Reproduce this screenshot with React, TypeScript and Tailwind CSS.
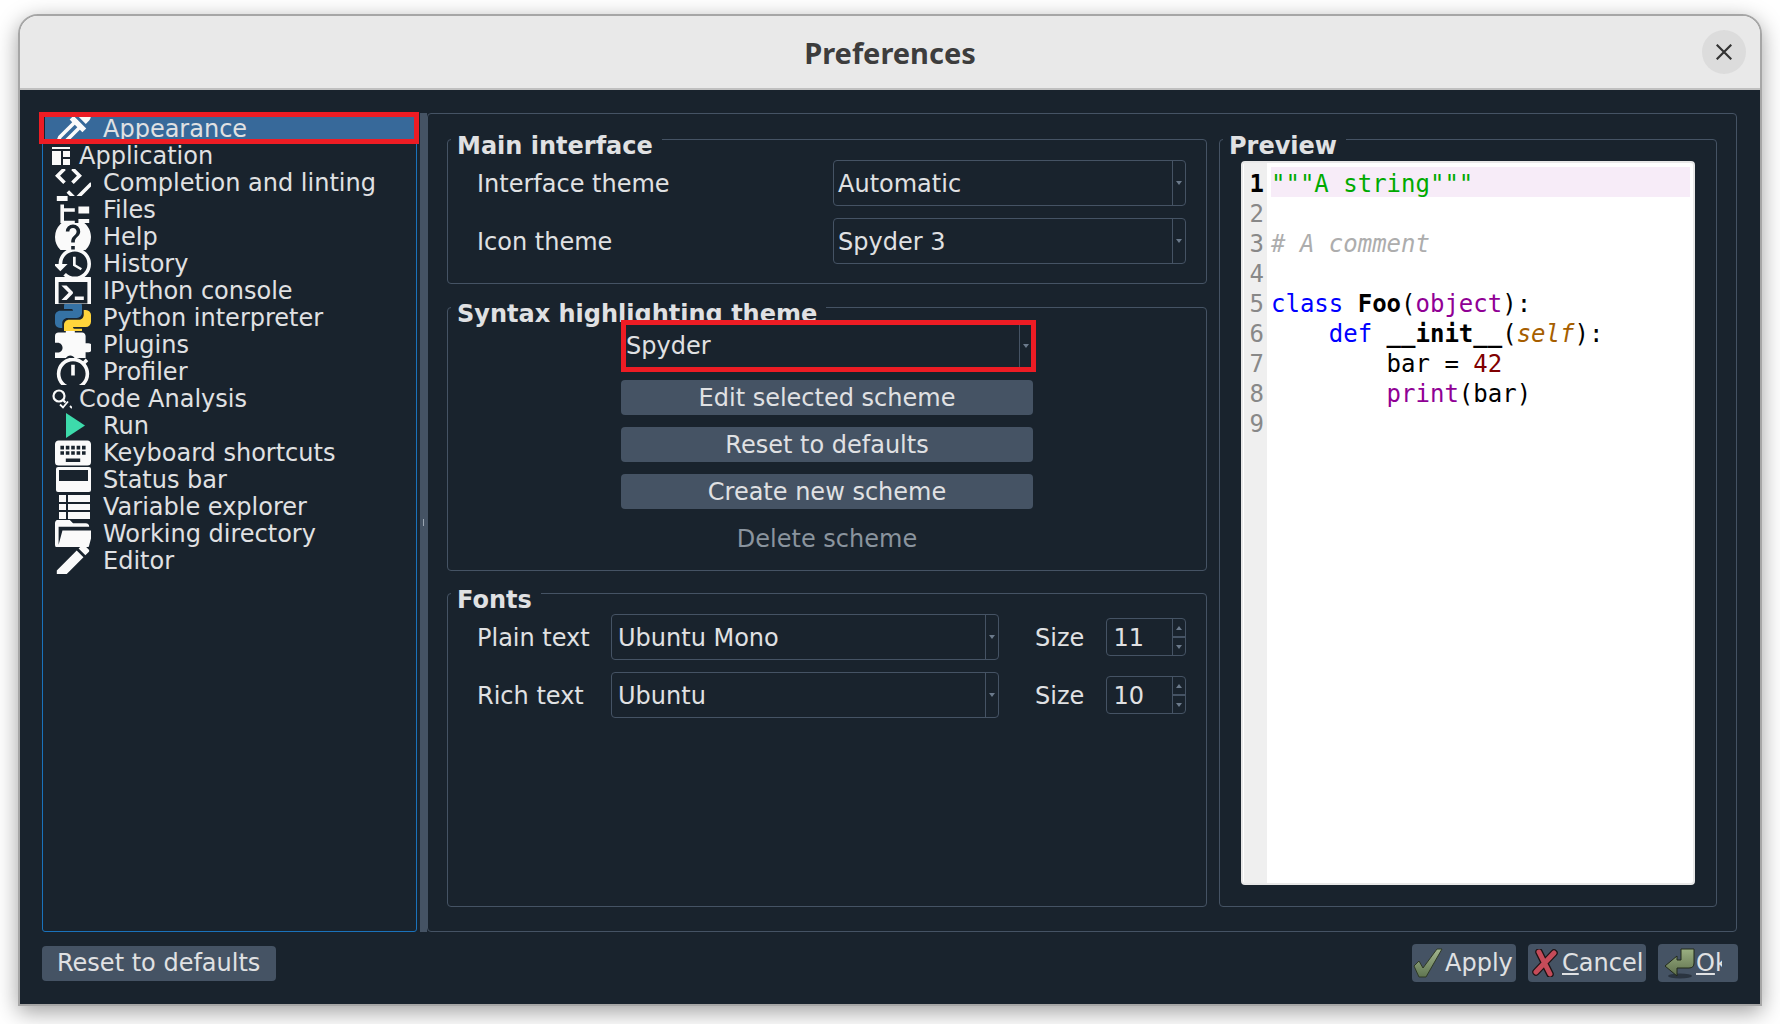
import type { ReactNode } from "react";

const sans = "font-['DejaVu_Sans',sans-serif]";

type NavItem = { label: string; icon: ReactNode; small?: boolean };

function MdiIcon({ d }: { d: string }) {
  return (
    <svg viewBox="2 2 20 20" className="h-9 w-9 shrink-0" fill="#fafafa" fillRule="evenodd">
      <path d={d} />
    </svg>
  );
}

function PythonIcon() {
  return (
    <svg viewBox="2 2 20 20" className="h-9 w-9 shrink-0">
      <path
        fill="#ffd43b"
        d="M19.14,7.5A2.86,2.86 0 0,1 22,10.36V14.14A2.86,2.86 0 0,1 19.14,17H12C12,17.39 12.32,17.96 12.71,17.96H17V19.64A2.86,2.86 0 0,1 14.14,22.5H9.86A2.86,2.86 0 0,1 7,19.64V15.89C7,14.31 8.28,13.04 9.86,13.04H15.11C16.69,13.04 17.96,11.76 17.96,10.18V7.5H19.14Z"
      />
      <path
        fill="#3572a5"
        d="M4.86,17.5C3.28,17.5 2,16.22 2,14.64V10.86C2,9.28 3.28,8 4.86,8H12C12,7.61 11.68,7.04 11.29,7.04H7V5.36C7,3.78 8.28,2.5 9.86,2.5H14.14C15.72,2.5 17,3.78 17,5.36V9.11C17,10.69 15.72,11.96 14.14,11.96H8.89C7.31,11.96 6.04,13.24 6.04,14.82V17.5H4.86Z"
      />
    </svg>
  );
}

function ApplicationIcon() {
  return (
    <svg viewBox="0 0 18 18" className="h-[18px] w-[18px] shrink-0" fill="#fafafa">
      <rect x="0" y="0" width="18" height="2" />
      <rect x="0" y="4" width="9" height="14" />
      <rect x="11" y="4" width="7" height="6" />
      <rect x="11" y="12" width="7" height="6" />
    </svg>
  );
}

function CodeAnalysisIcon() {
  return (
    <svg viewBox="0 0 20 20" className="h-5 w-5 shrink-0" fill="none" stroke="#fafafa" strokeWidth="2.2">
      <circle cx="7" cy="7" r="5.5" />
      <path d="M11 11 L13.5 13.5" />
      <path d="M8 15.5 L11 18.5 L16 12.5" strokeWidth="1.8" />
      <path d="M18 17 L20 19" strokeWidth="1.8" />
    </svg>
  );
}

function StatusIcon() {
  return (
    <svg viewBox="0 0 35 25" className="h-[25px] w-[35px] shrink-0">
      <rect width="35" height="25" rx="2" fill="#fafafa" />
      <rect x="3" y="3" width="29" height="11" fill="#19232d" />
    </svg>
  );
}

function TableIcon() {
  return (
    <svg viewBox="0 0 31 24" className="h-6 w-[31px] shrink-0" fill="#fafafa">
      <rect x="0" y="0" width="7" height="7" />
      <rect x="9" y="0" width="22" height="7" />
      <rect x="0" y="9" width="7" height="6" />
      <rect x="9" y="9" width="22" height="6" />
      <rect x="0" y="17" width="7" height="7" />
      <rect x="9" y="17" width="22" height="7" />
    </svg>
  );
}

const navItems: NavItem[] = [
  {
    label: "Appearance",
    icon: (
      <MdiIcon d="M19.35,11.72L17.22,13.85L15.81,12.43L8.1,20.14L3.5,22L2,20.5L3.86,15.9L11.57,8.19L10.15,6.78L12.28,4.65L19.35,11.72M16.76,3C17.93,1.83 19.83,1.83 21,3C22.17,4.17 22.17,6.07 21,7.24L19.08,9.16L14.84,4.92L16.76,3M5.56,17.03L4.5,19.5L6.97,18.44L14.4,11L13,9.6L5.56,17.03Z" />
    ),
  },
  { label: "Application", icon: <ApplicationIcon />, small: true },
  {
    label: "Completion and linting",
    icon: (
      <MdiIcon d="M6.59,3.41L2,8L6.59,12.6L8,11.18L4.82,8L8,4.82L6.59,3.41M12.41,3.41L11,4.82L14.18,8L11,11.18L12.41,12.6L17,8L12.41,3.41M21.59,11.59L13.5,19.68L9.83,16L8.42,17.41L13.5,22.5L23,13L21.59,11.59Z" />
    ),
  },
  {
    label: "Files",
    icon: <MdiIcon d="M3,3H9V7H3V3M15,10H21V14H15V10M15,17H21V21H15V17M13,13H7V18H13V20H7L5,20V9H7V11H13V13Z" />,
  },
  {
    label: "Help",
    icon: (
      <MdiIcon d="M15.07,11.25L14.17,12.17C13.45,12.89 13,13.5 13,15H11V14.5C11,13.39 11.45,12.39 12.17,11.67L13.41,10.41C13.78,10.05 14,9.55 14,9C14,7.89 13.1,7 12,7A2,2 0 0,0 10,9H8A4,4 0 0,1 12,5A4,4 0 0,1 16,9C16,9.88 15.64,10.67 15.07,11.25M13,19H11V17H13V19M12,2A10,10 0 0,0 2,12A10,10 0 0,0 12,22A10,10 0 0,0 22,12C22,6.47 17.5,2 12,2Z" />
    ),
  },
  {
    label: "History",
    icon: (
      <MdiIcon d="M13.5,8H12V13L16.28,15.54L17,14.33L13.5,12.25V8M13,3A9,9 0 0,0 4,12H1L4.96,16.03L9,12H6A7,7 0 0,1 13,5A7,7 0 0,1 20,12A7,7 0 0,1 13,19C11.07,19 9.32,18.21 8.06,16.94L6.64,18.36C8.27,20 10.5,21 13,21A9,9 0 0,0 22,12A9,9 0 0,0 13,3Z" />
    ),
  },
  {
    label: "IPython console",
    icon: (
      <MdiIcon d="M20,19V7H4V19H20M20,3A2,2 0 0,1 22,5V19A2,2 0 0,1 20,21H4A2,2 0 0,1 2,19V5A2,2 0 0,1 4,3H20M13,17V15H18V17H13M9.58,13L5.57,9H8.4L11.7,12.3C12.09,12.69 12.09,13.33 11.7,13.72L8.42,17H5.59L9.58,13Z" />
    ),
  },
  { label: "Python interpreter", icon: <PythonIcon /> },
  {
    label: "Plugins",
    icon: (
      <MdiIcon d="M20.5,11H19V7C19,5.89 18.1,5 17,5H13V3.5A2.5,2.5 0 0,0 10.5,1A2.5,2.5 0 0,0 8,3.5V5H4A2,2 0 0,0 2,7V10.8H3.5C5,10.8 6.2,12 6.2,13.5C6.2,15 5,16.2 3.5,16.2H2V20A2,2 0 0,0 4,22H7.8V20.5C7.8,19 9,17.8 10.5,17.8C12,17.8 13.2,19 13.2,20.5V22H17A2,2 0 0,0 19,20V16H20.5A2.5,2.5 0 0,0 23,13.5A2.5,2.5 0 0,0 20.5,11Z" />
    ),
  },
  {
    label: "Profiler",
    icon: (
      <MdiIcon d="M12,20A7,7 0 0,1 5,13A7,7 0 0,1 12,6A7,7 0 0,1 19,13A7,7 0 0,1 12,20M19.03,7.39L20.45,5.97C20,5.46 19.55,5 19.04,4.56L17.62,6C16.07,4.74 14.12,4 12,4A9,9 0 0,0 3,13A9,9 0 0,0 12,22C17,22 21,17.97 21,13C21,10.88 20.26,8.93 19.03,7.39M11,14H13V8H11V14M15,1H9V3H15V1Z" />
    ),
  },
  { label: "Code Analysis", icon: <CodeAnalysisIcon />, small: true },
  {
    label: "Run",
    icon: (
      <svg viewBox="0 0 36 27" className="h-[27px] w-9 shrink-0">
        <polygon points="11,1 30,13.5 11,26" fill="#3ddbab" />
      </svg>
    ),
  },
  {
    label: "Keyboard shortcuts",
    icon: (
      <MdiIcon d="M19,10H17V8H19V10M19,13H17V11H19V13M16,10H14V8H16V10M16,13H14V11H16V13M16,17H8V15H16V17M7,10H5V8H7V10M7,13H5V11H7V13M8,11H10V13H8V11M8,8H10V10H8V8M11,11H13V13H11V11M11,8H13V10H11V8M20,5H4C2.89,5 2,5.89 2,7V17A2,2 0 0,0 4,19H20A2,2 0 0,0 22,17V7C22,5.89 21.1,5 20,5Z" />
    ),
  },
  {
    label: "Status bar",
    icon: (
      <span className="flex w-9 shrink-0 justify-center">
        <StatusIcon />
      </span>
    ),
  },
  {
    label: "Variable explorer",
    icon: (
      <span className="flex w-9 shrink-0 justify-end pr-px">
        <TableIcon />
      </span>
    ),
  },
  {
    label: "Working directory",
    icon: (
      <MdiIcon d="M19,20H4C2.89,20 2,19.1 2,18V6C2,4.89 2.89,4 4,4H10L12,6H19A2,2 0 0,1 21,8H21L4,8V18L6.14,10H23.21L20.93,18.5C20.7,19.37 19.92,20 19,20Z" />
    ),
  },
  {
    label: "Editor",
    icon: (
      <MdiIcon d="M20.71,7.04C21.1,6.65 21.1,6 20.71,5.63L18.37,3.29C18,2.9 17.35,2.9 16.96,3.29L15.12,5.12L18.87,8.87L20.71,7.04M3,17.25V21H6.75L17.81,9.93L14.06,6.18L3,17.25Z" />
    ),
  },
];

function GroupBox({ title, className, children }: { title: string; className: string; children?: ReactNode }) {
  return (
    <div className={`relative rounded-[4px] border border-[#455364] ${className}`}>
      <div className="absolute -top-[9px] left-[3px] bg-[#19232d] pl-[6px] pr-[9px] text-[24px] leading-[30px] font-bold text-[#e0e1e3]">
        {title}
      </div>
      {children}
    </div>
  );
}

function ArrowDown() {
  return <div className="h-0 w-0 border-x-[3px] border-t-[4px] border-x-transparent border-t-[#6b7a8b]" />;
}

function Combo({ value, className, textClass }: { value: string; className: string; textClass: string }) {
  return (
    <div className={`flex h-[46px] items-stretch rounded-[4px] border border-[#455364] bg-[#19232d] ${className}`}>
      <div className={`flex-1 self-center text-[24px] leading-[36px] text-[#e0e1e3] ${textClass}`}>{value}</div>
      <div className="flex w-[13px] items-center justify-center border-l border-[#455364]">
        <ArrowDown />
      </div>
    </div>
  );
}

function SpinBox({ value }: { value: string }) {
  return (
    <div className="flex h-[38px] w-[80px] items-stretch rounded-[4px] border border-[#455364]">
      <div className="flex-1 self-center pl-[7px] pt-[2px] text-[24px] leading-[36px] text-[#e0e1e3]">{value}</div>
      <div className="flex w-[13px] flex-col border-l border-[#455364]">
        <div className="flex flex-1 items-center justify-center border-b-2 border-[#455364]">
          <div className="h-0 w-0 border-x-[3px] border-b-[4px] border-x-transparent border-b-[#6b7a8b]" />
        </div>
        <div className="flex flex-1 items-center justify-center">
          <ArrowDown />
        </div>
      </div>
    </div>
  );
}

function ThemeRow({ label, value }: { label: string; value: string }) {
  return (
    <div className="flex items-center">
      <div className="w-[356px] pt-[2px] text-[24px] leading-[36px] text-[#e0e1e3]">{label}</div>
      <Combo value={value} className="w-[353px]" textClass="pl-[4px] pt-[2px]" />
    </div>
  );
}

function FontRow({ label, value, size }: { label: string; value: string; size: string }) {
  return (
    <div className="flex items-center">
      <div className="w-[134px] pt-[2px] text-[24px] leading-[36px] text-[#e0e1e3]">{label}</div>
      <Combo value={value} className="w-[388px]" textClass="pl-[6px] pt-[2px]" />
      <div className="ml-[36px] w-[70.5px] pt-[2px] text-[24px] leading-[36px] text-[#e0e1e3]">Size</div>
      <SpinBox value={size} />
    </div>
  );
}

function SchemeButton({ label }: { label: string }) {
  return (
    <div className="flex h-[35px] w-[412px] items-center justify-center rounded-[4px] bg-[#455364] text-[24px] text-[#e0e1e3]">
      {label}
    </div>
  );
}

const gutter = ["1", "2", "3", "4", "5", "6", "7", "8", "9"];

function Preview() {
  return (
    <div className="ml-[21px] mt-[21px] flex h-[724px] w-[454px] overflow-hidden rounded-[4px] border-2 border-[#e8e8e8] bg-white pl-px font-['DejaVu_Sans_Mono',monospace] text-[24px] leading-[30px] text-black">
      <div className="w-[23px] shrink-0 bg-[#efefef] pr-[3px] pt-[6px] text-right text-[#888888]">
        {gutter.map((n) => (
          <div key={n} className={n === "1" ? "font-bold text-black" : ""}>
            {n}
          </div>
        ))}
      </div>
      <pre className="ml-[4px] flex-1 pt-[4px] font-['DejaVu_Sans_Mono',monospace]">
        <div className="mb-[2px] mr-[3px] h-[30px] bg-[#f7ecf8] pt-[2px] text-[#00aa00]">{'"""A string"""'}</div>
        <div>{" "}</div>
        <div className="italic text-[#adadad]"># A comment</div>
        <div>{" "}</div>
        <div>
          <span className="text-[#0000ff]">class</span> <span className="font-bold">Foo</span>(
          <span className="text-[#900095]">object</span>):
        </div>
        <div>
          {"    "}
          <span className="text-[#0000ff]">def</span> <span className="font-bold">__init__</span>(
          <span className="italic text-[#a65e00]">self</span>):
        </div>
        <div>
          {"        "}bar = <span className="text-[#800000]">42</span>
        </div>
        <div>
          {"        "}
          <span className="text-[#900095]">print</span>(bar)
        </div>
      </pre>
    </div>
  );
}

function CheckGlyph() {
  return (
    <svg viewBox="0 0 30 30" className="h-[30px] w-[30px] shrink-0">
      <defs>
        <linearGradient id="okGreen" x1="0" y1="0" x2="0" y2="1">
          <stop offset="0" stopColor="#a3b68f" />
          <stop offset="1" stopColor="#5f7550" />
        </linearGradient>
      </defs>
      <path d="M1 18 L6 13 L10 20 L24 1 L29 1 L13 29 L6 29 Z" fill="url(#okGreen)" stroke="#2f3a26" strokeWidth="1" />
    </svg>
  );
}

function CrossGlyph() {
  return (
    <svg viewBox="0 0 26 28" className="h-7 w-[26px] shrink-0" fill="none" strokeLinecap="round">
      <path d="M7 3 L18 25 M22 4 L4 23" stroke="#1d1416" strokeWidth="7.5" />
      <path d="M7 3 L18 25 M22 4 L4 23" stroke="#c54b59" strokeWidth="5" />
    </svg>
  );
}

function ReturnGlyph() {
  return (
    <svg viewBox="0 0 31 31" className="h-[31px] w-[31px] shrink-0">
      <defs>
        <linearGradient id="retGreen" x1="0" y1="0" x2="0" y2="1">
          <stop offset="0" stopColor="#9bb082" />
          <stop offset="1" stopColor="#5d6e4b" />
        </linearGradient>
      </defs>
      <ellipse cx="16" cy="28" rx="12" ry="2.5" fill="#141b22" opacity="0.55" />
      <path
        d="M17 1 H30 V15 Q30 20 25 20 H13 V28 L1 18 L13 8 V12 H17 Z"
        fill="url(#retGreen)"
        stroke="#222a1b"
        strokeWidth="1"
      />
    </svg>
  );
}

export default function App() {
  return (
    <div className={`h-[1024px] w-[1780px] overflow-hidden bg-white pl-[18px] pt-[14px] ${sans}`}>
      <div className="flex h-[992px] w-[1744px] flex-col overflow-hidden rounded-t-[20px] border-2 border-[#a6a6a6] shadow-[0_6px_22px_rgba(0,0,0,0.38)]">
        <div className="relative flex h-[74px] shrink-0 items-center justify-center border-b-2 border-[#c0c0c0] bg-[#e9e9e9]">
          <div className="pt-[2px] font-['Noto_Sans',sans-serif] text-[29px] font-bold text-[#3d3d3d]">
            Preferences
          </div>
          <div className="absolute right-[14px] top-[14px] flex h-[44px] w-[44px] items-center justify-center rounded-full bg-[#dcdcdc]">
            <svg viewBox="0 0 16 16" className="h-4 w-4" stroke="#333333" strokeWidth="2.2" strokeLinecap="square">
              <path d="M1.5 1.5 L14.5 14.5 M14.5 1.5 L1.5 14.5" />
            </svg>
          </div>
        </div>

        <div className="flex flex-1 flex-col bg-[#19232d] pl-[22px] pt-[23px]">
          <div className="flex h-[819px]">
            <div className="relative h-full w-[375px] rounded-[3px] border border-[#1a72bb] pt-[1px]">
              {navItems.map((item, i) => (
                <div
                  key={item.label}
                  className={`mx-[2px] flex h-[27px] items-center overflow-hidden text-[24px] text-[#e0e1e3] ${
                    i === 0 ? "bg-[#37699a]" : ""
                  } ${item.small ? "pl-[7px]" : "pl-[10px]"}`}
                >
                  {item.icon}
                  <span className={item.small ? (item.label === "Application" ? "ml-[9px]" : "ml-[7px]") : "ml-[12px]"}>
                    {item.label}
                  </span>
                </div>
              ))}
              <div className="absolute -left-[4px] -top-[2px] z-10 h-[32px] w-[380px] border-[5px] border-[#ed1c24]" />
            </div>

            <div className="ml-[3px] flex w-[7px] items-center justify-center bg-[#455364]">
              <div className="h-[7px] w-px bg-[#9aa5b1]" />
            </div>

            <div className="flex h-full w-[1310px] rounded-[4px] border border-[#455364] pl-[19px] pt-[25px]">
              <div className="flex w-[760px] flex-col">
                <GroupBox title="Main interface" className="h-[145px]">
                  <div className="flex flex-col gap-[12px] pl-[29px] pt-[20px]">
                    <ThemeRow label="Interface theme" value="Automatic" />
                    <ThemeRow label="Icon theme" value="Spyder 3" />
                  </div>
                </GroupBox>
                <GroupBox title="Syntax highlighting theme" className="mt-[23px] h-[264px]">
                  <div className="flex flex-col gap-[12px] pl-[173px] pt-[15px]">
                    <div className="relative z-10 mb-[-1px] w-[412px]">
                      <Combo value="Spyder" className="w-[412px]" textClass="pl-[4px]" />
                      <div className="absolute left-0 -top-[3px] h-[52px] w-[415px] border-[5px] border-[#ed1c24]" />
                    </div>
                    <SchemeButton label="Edit selected scheme" />
                    <SchemeButton label="Reset to defaults" />
                    <SchemeButton label="Create new scheme" />
                    <div className="flex h-[35px] w-[412px] items-center justify-center text-[24px] text-[#8a949e]">
                      Delete scheme
                    </div>
                  </div>
                </GroupBox>
                <GroupBox title="Fonts" className="mt-[22px] h-[314px]">
                  <div className="flex flex-col gap-[12px] pl-[29px] pt-[20px]">
                    <FontRow label="Plain text" value="Ubuntu Mono" size="11" />
                    <FontRow label="Rich text" value="Ubuntu" size="10" />
                  </div>
                </GroupBox>
              </div>
              <GroupBox title="Preview" className="ml-[12px] h-[768px] w-[498px]">
                <Preview />
              </GroupBox>
            </div>
          </div>

          <div className="flex h-[62px] items-center justify-between pr-[22px] text-[24px] text-[#e0e1e3]">
            <div className="flex h-[35px] w-[234px] items-center rounded-[4px] bg-[#455364] pl-[15px]">
              Reset to defaults
            </div>
            <div className="flex items-center gap-[12px]">
              <div className="flex h-[38px] w-[104px] items-center overflow-hidden rounded-[4px] bg-[#455364] pl-[1px]">
                <CheckGlyph />
                <span className="ml-[2px]">Apply</span>
              </div>
              <div className="flex h-[38px] w-[118px] items-center overflow-hidden rounded-[4px] bg-[#455364] pl-[4px]">
                <CrossGlyph />
                <span className="ml-[4px]">
                  <span className="underline">C</span>ancel
                </span>
              </div>
              <div className="flex h-[38px] w-[80px] items-center rounded-[4px] bg-[#455364] pl-[6px]">
                <ReturnGlyph />
                <span className="ml-px w-[26px] overflow-hidden whitespace-nowrap">
                  <span className="underline">O</span>k
                </span>
              </div>
            </div>
          </div>
        </div>
      </div>
    </div>
  );
}
